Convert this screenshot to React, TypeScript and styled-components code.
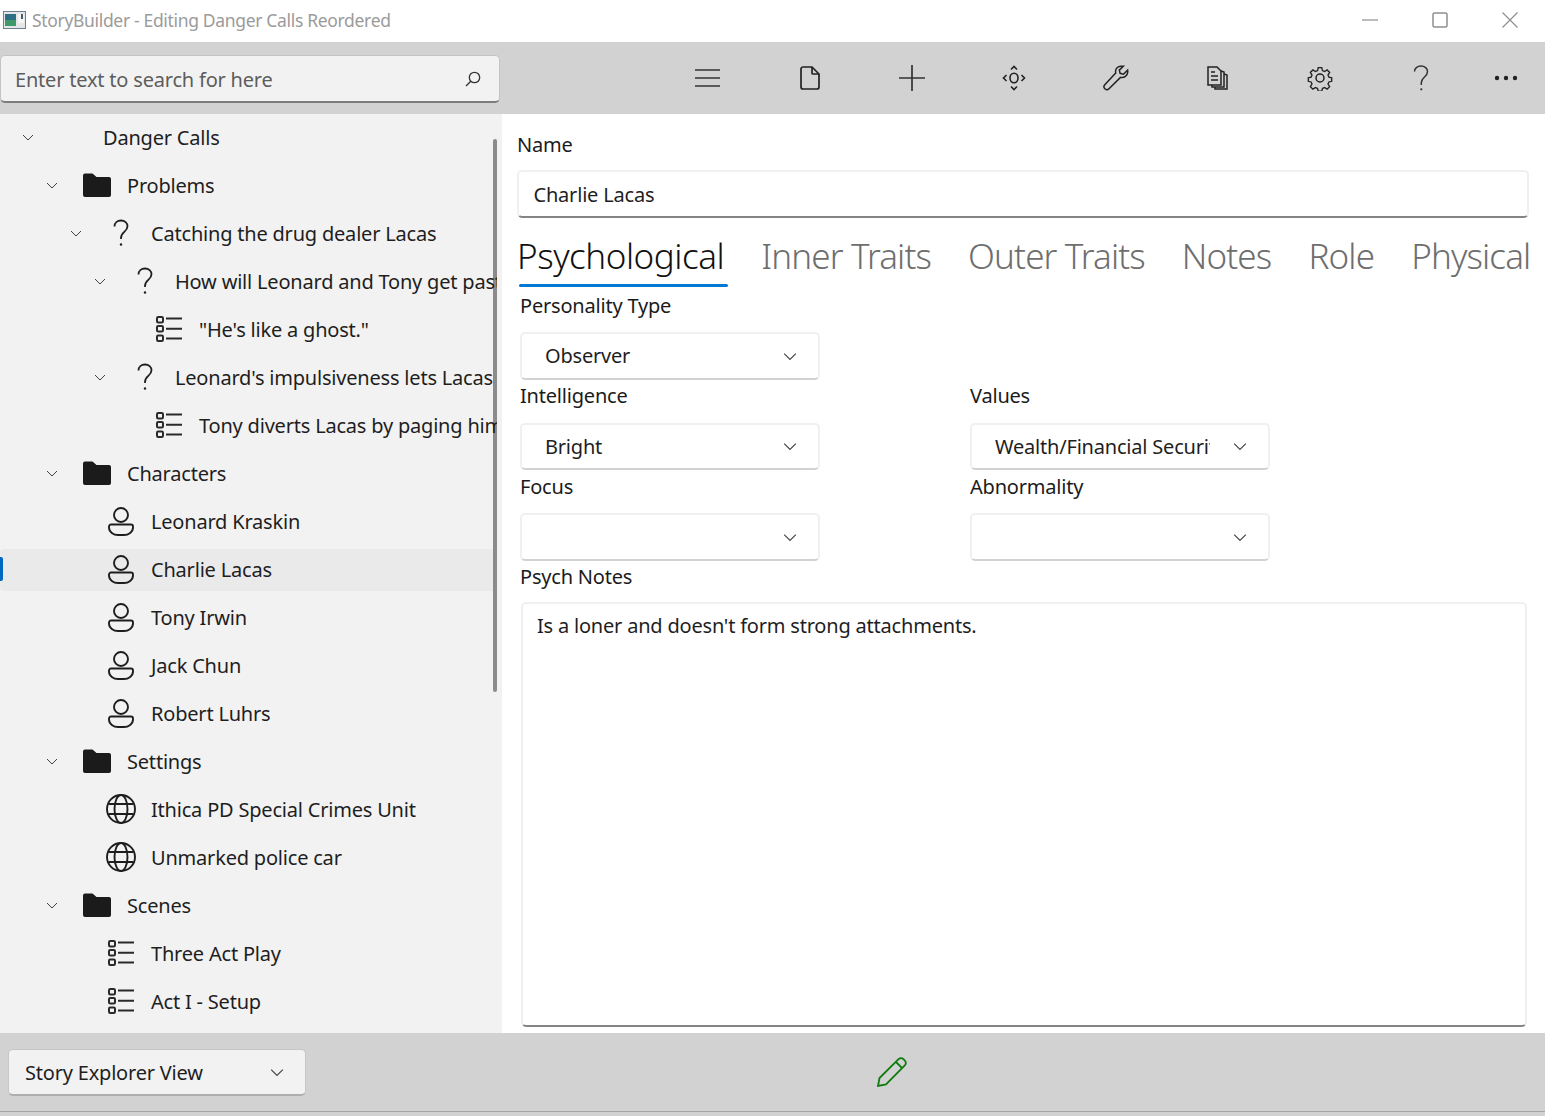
import React from "react";
import styled, { createGlobalStyle } from "styled-components";

const Global = createGlobalStyle`
  html, body { margin: 0; padding: 0; height: 100%; background: #fff; }
  #root { height: 100%; }
  * { box-sizing: border-box; }
  body { font-family: "Noto Sans", "Open Sans", "Liberation Sans", sans-serif; color: #1b1b1b; }
`;

const Page = styled.div`
  width: 1545px; height: 1116px; display: flex; flex-direction: column; overflow: hidden; background: #fff;
`;
const TitleBar = styled.header`
  height: 42px; flex: none; display: flex; align-items: center; padding: 0 0 2px 3px; background: #fff;
`;
const TitleText = styled.span`
  margin-left: 6px; font-size: 17.5px; letter-spacing: -0.33px; color: #9b9b9b; white-space: nowrap;
`;
const WindowButtons = styled.div`
  margin-left: auto; display: flex; align-items: center; color: #8a8a8a;
`;
const WindowButton = styled.div`
  width: 70px; height: 40px; display: flex; align-items: center; justify-content: center;
`;
const Toolbar = styled.div`
  height: 72px; flex: none; background: #d2d2d2; display: flex; align-items: center;
`;
const SearchBox = styled.div`
  width: 500px; height: 48px; margin-top: 1px; flex: none; background: #f2f2f2; border: 1px solid #c4c4c4;
  border-bottom: 2px solid #7c7c7c; border-radius: 5px; display: flex; align-items: center;
  padding: 2px 18px 0 14px; font-size: 20px; letter-spacing: -0.2px; color: #5d5d5d;
`;
const SearchIcon = styled.span`
  margin-left: auto; display: flex;
`;
const ToolIcons = styled.div`
  display: flex; margin-left: 157px;
`;
const ToolButton = styled.div<{ $narrow?: boolean }>`
  width: ${(p) => (p.$narrow ? 68 : 102)}px; height: 44px; flex: none; display: flex; align-items: center; justify-content: center; color: #2a2a2a;
`;
const Main = styled.div`
  flex: 1; display: flex; min-height: 0;
`;
const Sidebar = styled.aside`
  width: 502px; flex: none; background: #f2f2f2; position: relative; overflow: hidden;
`;
const TreeList = styled.div`
  width: 497px; overflow: hidden;
`;
const ScrollThumb = styled.div`
  position: absolute; left: 493px; top: 25px; width: 4px; height: 553px; border-radius: 2px; background: #8b8b8b;
`;
const TreeRow = styled.div<{ $depth: number; $selected?: boolean }>`
  height: 48px; display: flex; align-items: center; white-space: nowrap; position: relative;
  padding-left: ${(p) => p.$depth * 24 + 16}px; font-size: 20px; letter-spacing: -0.2px; color: #1e1e1e;
  ${(p) => p.$selected ? `
    &::before { content: ""; position: absolute; left: 0; right: 0; top: 3px; bottom: 3px; background: #eaeaea; border-radius: 4px; }
    &::after { content: ""; position: absolute; left: 0; top: 11px; width: 3px; height: 24px; background: #0067c0; border-radius: 0 2px 2px 0; }
  ` : ""}
  & > * { position: relative; z-index: 1; margin-bottom: 2px; }
`;
const Chevron = styled.span`
  width: 24px; flex: none; display: flex; justify-content: center; color: #444;
`;
const Spacer = styled.span`
  width: 24px; flex: none;
`;
const NodeIcon = styled.span`
  width: 30px; height: 30px; flex: none; margin-left: 18px; margin-right: 15px; display: flex; align-items: center; justify-content: center; color: #1e1e1e;
`;
const Content = styled.section`
  flex: 1; min-width: 0; display: flex; flex-direction: column; padding: 17px 16px 6px 16px; background: #fff;
`;
const FieldLabel = styled.label`
  display: block; font-size: 20px; line-height: 28px; letter-spacing: -0.2px; color: #1b1b1b; white-space: nowrap;
`;
const NameLabel = styled(FieldLabel)`
  margin-left: -1px;
`;
const NameInput = styled.div`
  height: 48px; margin-top: 11px; margin-left: -1px; background: #fff; border: 2px solid #f0f0f0; border-bottom: 2px solid #858585;
  border-radius: 5px; display: flex; align-items: center; padding: 0 14px; font-size: 20px; letter-spacing: -0.2px; color: #1e1e1e;
  width: 1012px; flex: none; padding-left: 14.5px;
`;
const Tabs = styled.nav`
  display: flex; gap: 37px; margin-top: 12px; margin-left: -1px; height: 57px; white-space: nowrap;
`;
const Tab = styled.div<{ $active?: boolean }>`
  font-size: 35px; font-weight: 300; line-height: 52px; height: 57px; position: relative;
  letter-spacing: ${(p) => (p.$active ? "-0.45px" : "-0.85px")};
  color: ${(p) => (p.$active ? "#111" : "#6e6e6e")};
  ${(p) => p.$active ? `
    &::after { content: ""; position: absolute; left: 2px; right: -4px; bottom: 0; height: 3px; border-radius: 2px; background: #0078d4; }
  ` : ""}
`;
const Form = styled.div`
  padding-left: 2px; flex: 1; display: flex; flex-direction: column; min-height: 0; margin-top: 4.6px;
`;
const ComboGrid = styled.div`
  display: grid; grid-template-columns: 450px 300px; justify-content: start;
`;
const Field = styled.div`
  height: 90.5px;
`;
const Combo = styled.div<{ $width?: number }>`
  width: ${(p) => p.$width ?? 300}px; height: 47.5px; margin-top: 12.5px; background: #fff; border: 2px solid #f0f0f0;
  border-bottom: 2px solid #d2d2d2; border-radius: 5px; display: flex; align-items: center;
  padding: 0 21px 0 23px; font-size: 20px; letter-spacing: -0.2px; color: #1e1e1e; white-space: nowrap;
`;
const ComboValue = styled.span`
  width: 215px; overflow: hidden;
`;
const ComboChevron = styled.span`
  margin-left: auto; display: flex; color: #444;
`;
const NotesArea = styled.div`
  flex: 1; width: 1006px; margin-top: 11px; margin-left: 1px; border: 2px solid #f0f0f0; border-bottom: 2px solid #858585; border-radius: 5px;
  padding: 6px 14px; font-size: 20px; line-height: 32px; letter-spacing: -0.2px; color: #1e1e1e;
`;
const BottomBar = styled.footer`
  height: 79px; flex: none; background: #d2d2d2; border-bottom: 1px solid #a5a5a5; display: flex; align-items: center; padding-left: 8px;
`;
const ViewCombo = styled.div`
  width: 298px; height: 47px; margin-top: 1px; background: #f2f2f2; border: 1px solid #c6c6c6; border-bottom: 2px solid #aeaeae; border-radius: 5px;
  display: flex; align-items: center; padding: 0 21px 0 16px; font-size: 20px; letter-spacing: -0.2px; color: #1e1e1e;
`;
const PencilSlot = styled.div`
  margin-left: 571px; display: flex;
`;
const Tail = styled.div`
  height: 4px; flex: none; background: #d2d2d2;
`;

const ChevronIcon = ({ size = 12 }: { size?: number }) => (
  <svg width={size} height={size} viewBox="0 0 12 12" fill="none" stroke="currentColor" strokeWidth="1"><path d="M1 4l5 5 5-5" /></svg>
);
const Folder = () => (
  <svg width="28" height="24" viewBox="0 0 28 24" fill="#1b1b1b"><path d="M0 2.5A2 2 0 0 1 2 .5h7.5l4 3.5H26a2 2 0 0 1 2 2V22a2 2 0 0 1-2 2H2a2 2 0 0 1-2-2z" /></svg>
);
const Question = () => (
  <svg width="18" height="28" viewBox="0 0 18 28" fill="none" stroke="#1e1e1e" strokeWidth="1.8"><path d="M2.500 7.500C2.500 4 5.300 1.500 9 1.500s6.500 2.500 6.500 5.800c0 2.500-1.300 4-3.200 5.600-2 1.700-3.300 3-3.300 6v1" /><circle cx="9" cy="25.500" r="1.200" fill="#1e1e1e" stroke="none" /></svg>
);
const ListIcon = () => (
  <svg width="26" height="26" viewBox="0 0 26 26" fill="none" stroke="#2a2a2a" strokeWidth="2"><rect x="1" y="1" width="6" height="5.500" rx="1.200" /><rect x="1" y="10" width="6" height="5.500" rx="1.200" /><rect x="1" y="19.500" width="6" height="5.500" rx="1.200" /><path d="M10 2.500h16M10 12.700h16M10 22.500h16" /></svg>
);
const Person = () => (
  <svg width="26" height="29" viewBox="0 0 26 29" fill="none" stroke="#1e1e1e" strokeWidth="1.900"><circle cx="13" cy="8" r="7" /><path d="M3 17.500h20a2 2 0 0 1 2 2v1c0 4.500-4.500 7.500-9 7.500h-6c-4.500 0-9-3-9-7.500v-1a2 2 0 0 1 2-2z" /></svg>
);
const Globe = () => (
  <svg width="30" height="30" viewBox="0 0 30 30" fill="none" stroke="#1e1e1e" strokeWidth="1.900"><circle cx="15" cy="15" r="14" /><ellipse cx="15" cy="15" rx="6.500" ry="14" /><path d="M2.500 10h25M2.500 20h25" /></svg>
);

type Kind = "folder" | "q" | "list" | "person" | "globe" | "none";
type Node = { depth: number; text: string; kind: Kind; chevron?: boolean; selected?: boolean };
const nodes: Node[] = [
  { depth: 0, text: "Danger Calls", kind: "none", chevron: true },
  { depth: 1, text: "Problems", kind: "folder", chevron: true },
  { depth: 2, text: "Catching the drug dealer Lacas", kind: "q", chevron: true },
  { depth: 3, text: "How will Leonard and Tony get past", kind: "q", chevron: true },
  { depth: 4, text: "\"He's like a ghost.\"", kind: "list" },
  { depth: 3, text: "Leonard's impulsiveness lets Lacas", kind: "q", chevron: true },
  { depth: 4, text: "Tony diverts Lacas by paging him", kind: "list" },
  { depth: 1, text: "Characters", kind: "folder", chevron: true },
  { depth: 2, text: "Leonard Kraskin", kind: "person" },
  { depth: 2, text: "Charlie Lacas", kind: "person", selected: true },
  { depth: 2, text: "Tony Irwin", kind: "person" },
  { depth: 2, text: "Jack Chun", kind: "person" },
  { depth: 2, text: "Robert Luhrs", kind: "person" },
  { depth: 1, text: "Settings", kind: "folder", chevron: true },
  { depth: 2, text: "Ithica PD Special Crimes Unit", kind: "globe" },
  { depth: 2, text: "Unmarked police car", kind: "globe" },
  { depth: 1, text: "Scenes", kind: "folder", chevron: true },
  { depth: 2, text: "Three Act Play", kind: "list" },
  { depth: 2, text: "Act I - Setup", kind: "list" },
];
const iconFor = (k: Kind) => {
  switch (k) {
    case "folder": return <Folder />;
    case "q": return <Question />;
    case "list": return <ListIcon />;
    case "person": return <Person />;
    case "globe": return <Globe />;
    default: return null;
  }
};

const toolIcons = [
  <svg key="a" width="26" height="20" viewBox="0 0 26 20" stroke="#333" strokeWidth="1.6" fill="none"><path d="M0 2h25M0 10h25M0 18h25" /></svg>,
  <svg key="b" width="20" height="24" viewBox="0 0 20 24" stroke="#222" strokeWidth="1.7" fill="none"><path d="M3 1h9l7 7v13a2 2 0 0 1-2 2H3a2 2 0 0 1-2-2V3a2 2 0 0 1 2-2z" /><path d="M12 1v6a1 1 0 0 0 1 1h6" /></svg>,
  <svg key="c" width="26" height="26" viewBox="0 0 26 26" stroke="#333" strokeWidth="1.7" fill="none"><path d="M13 0v26M0 13h26" /></svg>,
  <svg key="d" width="24" height="26" viewBox="0 0 24 26" stroke="#222" strokeWidth="1.600" fill="none"><ellipse cx="12" cy="13" rx="4" ry="4.800" /><path d="M9 4.500L12 1.500l3 3M9 21.500l3 3 3-3M4.500 10L1.500 13l3 3M19.500 10l3 3-3 3" /></svg>,
  <svg key="e" width="26" height="26" viewBox="0 0 26 26" stroke="#222" strokeWidth="1.500" fill="none"><path d="M17.500 1.200c-3.500.3-5.500 3.200-4.800 6.700L1.800 19.700c-1.200 1.300-1 3 .1 4.100 1.200 1.100 2.900 1.200 4.100 0L17.500 12.400c3.700.9 7-1.600 7.300-5.400l-.2-1.800-4.100 4-3.400-.9-.8-3.200 4-3.900z" /></svg>,
  <svg key="f" width="21" height="24" viewBox="0 0 21 24" stroke="#222" strokeWidth="1.500" fill="none" style={{ marginLeft: -2 }}><path d="M1 1h9l4 4v14H1z" /><path d="M14 5l3 1v15H5v-2" /><path d="M17 8l3 1v14H8v-2" /><path d="M4 6h4M4 10h7M4 14h7" strokeWidth="1.300" /></svg>,
  <svg key="g" width="26" height="26" viewBox="0 0 26 26" stroke="#222" strokeWidth="1.500" fill="none"><circle cx="13" cy="13" r="4" /><path d="M11 1.500h4l.7 3.300 2.300 1 2.900-1.800 2.800 2.800-1.800 2.900 1 2.300 3.100.7v4l-3.100.7-1 2.300 1.800 2.900-2.800 2.800-2.900-1.800-2.300 1-.7 3.100h-4l-.7-3.100-2.300-1-2.900 1.800-2.800-2.800 1.800-2.900-1-2.300-3.100-.7v-4l3.100-.7 1-2.300-1.800-2.900 2.800-2.800 2.900 1.800 2.300-1z" transform="translate(1.300 1.300) scale(.9)" /></svg>,
  <svg key="h" width="16" height="26" viewBox="0 0 16 26" stroke="#333" strokeWidth="1.500" fill="none" style={{ marginLeft: -2 }}><path d="M1.500 6.500C1.500 3.500 4.200 1 8 1s6.500 2.500 6.500 5.500c0 2.500-1.200 4-3 5.500-2 1.800-3.200 3-3.200 6v2" /><circle cx="8.300" cy="24.300" r="1.100" fill="#333" stroke="none" /></svg>,
  <svg key="i" width="24" height="6" viewBox="0 0 24 6" fill="#222" style={{ marginLeft: -2 }}><circle cx="3" cy="3" r="2.200" /><circle cx="12" cy="3" r="2.200" /><circle cx="21" cy="3" r="2.200" /></svg>,
];

export default function App() {
  return (
    <Page>
      <Global />
      <TitleBar>
        <svg width="23" height="18" viewBox="0 0 23 18"><rect x="0.500" y="0.500" width="22" height="17" fill="#e6e6e6" stroke="#6d7f90" /><rect x="2" y="3" width="11" height="12" fill="#2d6d86" /><rect x="2" y="9" width="11" height="6" fill="#3f9a6a" /><rect x="15" y="3" width="6" height="9" fill="#f5f5f5" /><rect x="18" y="3" width="2" height="5" fill="#455a66" /></svg>
        <TitleText>StoryBuilder - Editing Danger Calls Reordered</TitleText>
        <WindowButtons>
          <WindowButton><svg width="16" height="2" viewBox="0 0 16 2"><path d="M0 1h16" stroke="#8f8f8f" strokeWidth="1.200" /></svg></WindowButton>
          <WindowButton><svg width="16" height="16" viewBox="0 0 16 16" fill="none"><rect x="1" y="1" width="14" height="14" rx="1.500" stroke="#8f8f8f" strokeWidth="1.500" /></svg></WindowButton>
          <WindowButton><svg width="16" height="16" viewBox="0 0 16 16"><path d="M.5.500l15 15M15.500.500l-15 15" stroke="#8f8f8f" strokeWidth="1.200" /></svg></WindowButton>
        </WindowButtons>
      </TitleBar>
      <Toolbar>
        <SearchBox>
          Enter text to search for here
          <SearchIcon><svg width="16" height="16" viewBox="0 0 16 16" fill="none" stroke="#333" strokeWidth="1.300"><circle cx="9.500" cy="6.500" r="5.200" /><path d="M5.800 10.200L1 15" /></svg></SearchIcon>
        </SearchBox>
        <ToolIcons>
          {toolIcons.map((ic, i) => <ToolButton key={i} $narrow={i === toolIcons.length - 1}>{ic}</ToolButton>)}
        </ToolIcons>
      </Toolbar>
      <Main>
        <Sidebar>
          <TreeList>
            {nodes.map((n, i) => (
              <TreeRow key={i} $depth={n.depth} $selected={n.selected}>
                {n.chevron ? <Chevron><ChevronIcon /></Chevron> : <Spacer />}
                <NodeIcon>{iconFor(n.kind)}</NodeIcon>
                <span>{n.text}</span>
              </TreeRow>
            ))}
          </TreeList>
          <ScrollThumb />
        </Sidebar>
        <Content>
          <NameLabel>Name</NameLabel>
          <NameInput>Charlie Lacas</NameInput>
          <Tabs>
            <Tab $active>Psychological</Tab>
            <Tab>Inner Traits</Tab>
            <Tab>Outer Traits</Tab>
            <Tab>Notes</Tab>
            <Tab>Role</Tab>
            <Tab>Physical</Tab>
          </Tabs>
          <Form>
            <ComboGrid>
              <Field>
                <FieldLabel>Personality Type</FieldLabel>
                <Combo>Observer<ComboChevron><ChevronIcon size={14} /></ComboChevron></Combo>
              </Field>
              <Field />
              <Field>
                <FieldLabel>Intelligence</FieldLabel>
                <Combo>Bright<ComboChevron><ChevronIcon size={14} /></ComboChevron></Combo>
              </Field>
              <Field>
                <FieldLabel>Values</FieldLabel>
                <Combo><ComboValue>Wealth/Financial Security</ComboValue><ComboChevron><ChevronIcon size={14} /></ComboChevron></Combo>
              </Field>
              <Field>
                <FieldLabel>Focus</FieldLabel>
                <Combo><ComboChevron><ChevronIcon size={14} /></ComboChevron></Combo>
              </Field>
              <Field>
                <FieldLabel>Abnormality</FieldLabel>
                <Combo><ComboChevron><ChevronIcon size={14} /></ComboChevron></Combo>
              </Field>
            </ComboGrid>
            <FieldLabel>Psych Notes</FieldLabel>
            <NotesArea>Is a loner and doesn't form strong attachments.</NotesArea>
          </Form>
        </Content>
      </Main>
      <BottomBar>
        <ViewCombo>
          Story Explorer View
          <ComboChevron><ChevronIcon size={14} /></ComboChevron>
        </ViewCombo>
        <PencilSlot>
          <svg width="30" height="30" viewBox="0 0 30 30" fill="none" stroke="#107c10" strokeWidth="1.800"><path d="M1 29l1.500-8L21.500 2.200c1.500-1.300 3.500-1.300 5 0l1.300 1.300c1.300 1.500 1.300 3.500 0 5L9 27.500z" /><path d="M19 5l6 6" /></svg>
        </PencilSlot>
      </BottomBar>
      <Tail />
    </Page>
  );
}
